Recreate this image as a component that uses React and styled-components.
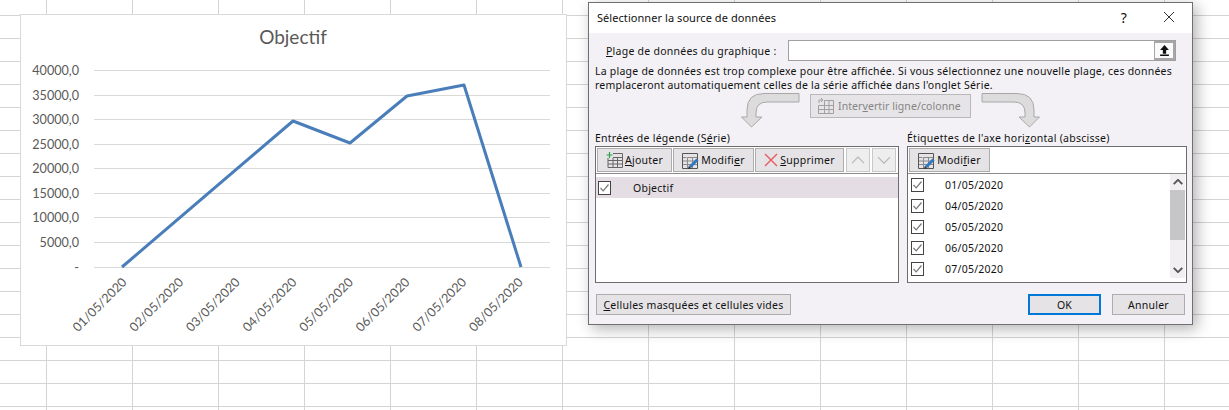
import React from "react";
import styled, { createGlobalStyle } from "styled-components";

const GlobalStyle = createGlobalStyle`
  html, body {
    margin: 0;
    padding: 0;
    overflow: hidden;
  }
`;

const Sheet = styled.div`
  position: relative;
  width: 1229px;
  height: 410px;
  padding: 14px 0 0 20px;
  box-sizing: border-box;
  background-color: #fff;
  background-image:
    linear-gradient(to left, #d4d4d4 1px, transparent 1px),
    linear-gradient(to top, #d4d4d4 1px, transparent 1px);
  background-size: 86px 23px;
  background-position: -39px -7px;
`;

const ChartPanel = styled.div`
  width: 547px;
  height: 332px;
  box-sizing: border-box;
  border: 1px solid #d9d9d9;
  background: #fff;
`;

const ChartSvg = styled.svg`
  display: block;
  font-family: Lato, "Liberation Sans", sans-serif;
  fill: #595959;
`;

const Dialog = styled.div`
  position: absolute;
  left: 588px;
  top: 2px;
  width: 605px;
  height: 323px;
  box-sizing: border-box;
  border: 1px solid #707070;
  background: #f3f1f5;
  box-shadow: 4px 4px 14px rgba(0, 0, 0, 0.3);
  font-family: "Noto Sans", sans-serif;
  font-size: 10.5px;
  letter-spacing: 0.25px;
  color: #111;
`;

const TitleBar = styled.div`
  display: flex;
  align-items: center;
  height: 30px;
  padding: 0 0 2px 8px;
  box-sizing: border-box;
  background: #fff;
`;

const Title = styled.div`
  flex: 1;
  font-size: 11px;
  letter-spacing: 0.06px;
`;

const HelpMark = styled.span`
  width: 14px;
  margin-right: 32px;
  font-size: 14px;
  text-align: center;
`;

const CloseBox = styled.span`
  display: flex;
  margin-right: 17px;
`;

const Body = styled.div`
  padding: 7px 5px 0 6px;
`;

const RangeRow = styled.div`
  display: flex;
  align-items: center;
  height: 21px;
  padding-left: 11px;
`;

const RangeLabel = styled.label`
  width: 182px;
`;

const RangeInput = styled.div`
  display: flex;
  justify-content: flex-end;
  width: 388px;
  height: 21px;
  box-sizing: border-box;
  border: 1px solid #a0a0a0;
  background: #fff;
`;

const RangeButton = styled.span`
  display: flex;
  align-items: center;
  justify-content: center;
  width: 21px;
  box-sizing: border-box;
  border: 2px solid #a6a6a6;
  border-left-width: 1px;
  background: #fafafa;
`;

const Note = styled.p`
  margin: 3px 0 0;
  font-size: 10.5px;
  line-height: 14px;
  letter-spacing: 0.235px;
  white-space: nowrap;
`;

const ArrowRow = styled.div`
  display: flex;
  align-items: flex-start;
  height: 38px;
  margin-top: 1px;
  padding-left: 146px;
`;

const Arrow = styled.svg`
  flex: none;
  transform: ${(p) => (p.$flip ? "scaleX(-1)" : "none")};
`;

const SwapButton = styled.div`
  display: flex;
  align-items: center;
  gap: 4px;
  width: 161px;
  height: 24px;
  margin: 1px 10px 0 10px;
  padding-left: 7px;
  box-sizing: border-box;
  border: 1px solid #b9b9b9;
  background: #e6e4e7;
  color: #858585;
  letter-spacing: 0.08px;
`;

const Columns = styled.div`
  display: grid;
  grid-template-columns: 304px 280px;
  column-gap: 8px;
`;

const Heading = styled.div`
  height: 15px;
  line-height: 15px;
`;

const ListBox = styled.div`
  display: flex;
  flex-direction: column;
  height: 137px;
  box-sizing: border-box;
  border: 1px solid #6d6d6d;
  background: #fff;
`;

const Toolbar = styled.div`
  display: flex;
  flex: none;
  gap: 1px;
  height: 27px;
  padding: 1px 0 0 1px;
  box-sizing: border-box;
  border-bottom: 1px solid #8c8c8c;
  margin-bottom: ${(p) => p.$gap}px;
`;

const ToolButton = styled.button`
  display: flex;
  align-items: center;
  justify-content: center;
  gap: 2px;
  width: ${(p) => p.$w}px;
  height: 24px;
  margin-left: ${(p) => p.$ml || 0}px;
  padding: 0;
  box-sizing: border-box;
  border: 1px solid ${(p) => (p.disabled ? "#c8c8c8" : "#adadad")};
  background: ${(p) => (p.disabled ? "#eeeeee" : "#e5e3e6")};
  color: #111;
  font: inherit;
  letter-spacing: inherit;
`;

const ListBody = styled.div`
  display: flex;
  flex: 1;
  min-height: 0;
`;

const Rows = styled.div`
  flex: 1;
`;

const Row = styled.div`
  display: flex;
  align-items: center;
  height: 21px;
  padding-left: ${(p) => p.$pad}px;
  background: ${(p) => (p.$selected ? "#e4dee4" : "transparent")};
`;

const RowText = styled.span`
  margin-left: ${(p) => p.$gap}px;
`;

const Scrollbar = styled.div`
  display: flex;
  flex-direction: column;
  width: 15px;
  height: 104px;
  margin-right: 1px;
  background: #f1eff2;
`;

const ScrollEnd = styled.div`
  display: flex;
  align-items: center;
  justify-content: center;
  height: 16px;
`;

const ScrollThumb = styled.div`
  height: 50px;
  background: #c6c5c7;
`;

const ScrollGap = styled.div`
  flex: 1;
`;

const Footer = styled.div`
  display: flex;
  gap: 11px;
  margin-top: 11px;
  padding: 0 2px 0 1px;
`;

const FooterButton = styled.button`
  width: ${(p) => p.$w}px;
  height: 21px;
  margin-right: ${(p) => (p.$push ? "auto" : "0")};
  padding: 0;
  box-sizing: border-box;
  border: ${(p) => (p.$primary ? "2px solid #0078d7" : "1px solid #adadad")};
  background: #e5e3e6;
  color: #111;
  font: inherit;
  letter-spacing: inherit;
`;

const Key = styled.span`
  text-decoration: underline;
`;

const yLabels = [
  ["40000,0", 70],
  ["35000,0", 95],
  ["30000,0", 119],
  ["25000,0", 144],
  ["20000,0", 168],
  ["15000,0", 193],
  ["10000,0", 217],
  ["5000,0", 242],
  ["-", 267],
];

const dates = ["01", "02", "03", "04", "05", "06", "07", "08"].map((d) => `${d}/05/2020`);

const points = "122,267 293,121 350,143 407,96 464,85 521,267";

const Chart = () => (
  <ChartSvg width="545" height="330" viewBox="21 15 545 330">
    <text x="293" y="44" fontSize="19" textAnchor="middle">Objectif</text>
    {yLabels.map(([label, y]) => (
      <g key={label}>
        <line x1="94" x2="550" y1={y + 0.5} y2={y + 0.5} stroke="#d9d9d9" />
        <text x="79" y={y + 5} fontSize="12.6" textAnchor="end">{label}</text>
      </g>
    ))}
    <polyline points={points} fill="none" stroke="#4a7ebb" strokeWidth="3" strokeLinejoin="round" />
    {dates.map((d, i) => (
      <text
        key={d}
        fontSize="12.6"
        textAnchor="end"
        transform={`translate(${127.5 + i * 56.6} 283) rotate(-45)`}
      >
        {d}
      </text>
    ))}
  </ChartSvg>
);

const CurvedArrow = ({ flip }) => (
  <Arrow $flip={flip} width="59" height="35" viewBox="0 0 59 35">
    <path
      d="M58 .5V9H26Q15 9 15 20V24H21L10.5 34 .5 24H6V17Q6 .5 23 .5Z"
      fill="#dcdcdc"
      stroke="#a8a8a8"
    />
  </Arrow>
);

const TableGrid = () => (
  <g fill="none">
    <path d="M.5 5.5H4.5M.5 9H15.5M.5 12.5H15.5M5.5 5.5V16.5M10.5 5.5V16.5M5.5 5.5H15.5" stroke="#8a8a8a" />
    <path d="M.5 1.5H15.5V16.5H.5Z" stroke="#555" />
  </g>
);

const AddIcon = () => (
  <svg width="17" height="17" viewBox="-1 0 17 17">
    <path d="M1 1.5H15.5V15.5H1V1.5ZM1 5.5H15.5M1 8.5H15.5M1 12H15.5M6 5.5V15.5M10.5 5.5V15.5" fill="none" stroke="#666" />
    <rect x="-1" y="0" width="7" height="6" fill="#e5e3e6" />
    <path d="M2.5 0V6M-.5 3H5.5" stroke="#2ca24c" strokeWidth="1.2" />
  </svg>
);

const EditIcon = () => (
  <svg width="17" height="17" viewBox="0 0 17 17">
    <TableGrid />
    <path d="M8 15L15.5 7.5" stroke="#2f78c4" strokeWidth="3" />
    <path d="M6 17L6.8 13.8L9.2 16.2Z" fill="#333" />
  </svg>
);

const DeleteIcon = () => (
  <svg width="14" height="14" viewBox="0 0 14 14">
    <path d="M1 1L13 13M13 1L1 13" stroke="#e8595b" strokeWidth="1.4" />
  </svg>
);

const SwapIcon = () => (
  <svg width="16" height="16" viewBox="0 0 16 16">
    <g fill="none" stroke="#a0a0a0">
      <path d="M6.5 2.5H15.5V15.5H.5V7.5H6.5ZM.5 11.5H15.5M6.5 7.5H15.5M6.5 7.5V15.5M11 2.5V15.5" />
      <path d="M1 5V2H4M3 0L5 2L3 4" />
    </g>
  </svg>
);

const Chevron = ({ up, color = "#b5b5b5", weight = 1.2, size = 14 }) => (
  <svg width={size} height={size * 0.6} viewBox="0 0 14 8">
    <path d={up ? "M1 7L7 1L13 7" : "M1 1L7 7L13 1"} fill="none" stroke={color} strokeWidth={weight} />
  </svg>
);

const CheckBox = () => (
  <svg width="13" height="14" viewBox="0 0 13 14">
    <rect x=".5" y=".5" width="12" height="13" fill="#fff" stroke="#444" />
    <path d="M2.5 7L5.2 9.8L10.5 3.5" fill="none" stroke="#777" strokeWidth="1.2" />
  </svg>
);

const App = () => (
  <>
    <GlobalStyle />
    <Sheet>
      <ChartPanel>
        <Chart />
      </ChartPanel>
      <Dialog>
        <TitleBar>
          <Title>Sélectionner la source de données</Title>
          <HelpMark>?</HelpMark>
          <CloseBox>
            <svg width="12" height="12" viewBox="0 0 12 12">
              <path d="M1 1L11 11M11 1L1 11" stroke="#333" />
            </svg>
          </CloseBox>
        </TitleBar>
        <Body>
          <RangeRow>
            <RangeLabel><Key>P</Key>lage de données du graphique :</RangeLabel>
            <RangeInput>
              <RangeButton>
                <svg width="11" height="11" viewBox="0 0 10 10">
                  <path d="M5 0L9 4.5H6.5V8H3.5V4.5H1ZM1 8.7H9V10H1Z" fill="#111" />
                </svg>
              </RangeButton>
            </RangeInput>
          </RangeRow>
          <Note>
            La plage de données est trop complexe pour être affichée. Si vous sélectionnez une nouvelle plage, ces données
            <br />
            remplaceront automatiquement celles de la série affichée dans l'onglet Série.
          </Note>
          <ArrowRow>
            <CurvedArrow />
            <SwapButton>
              <SwapIcon />
              <span>Inter<Key>v</Key>ertir ligne/colonne</span>
            </SwapButton>
            <CurvedArrow flip />
          </ArrowRow>
          <Columns>
            <div>
              <Heading>Entrées de légende (S<Key>é</Key>rie)</Heading>
              <ListBox>
                <Toolbar $gap={3}>
                  <ToolButton $w={75}><AddIcon /><span><Key>A</Key>jouter</span></ToolButton>
                  <ToolButton $w={81}><EditIcon /><span>Modifi<Key>e</Key>r</span></ToolButton>
                  <ToolButton $w={89}><DeleteIcon /><span><Key>S</Key>upprimer</span></ToolButton>
                  <ToolButton $w={24} $ml={1} disabled><Chevron up /></ToolButton>
                  <ToolButton $w={24} $ml={1} disabled><Chevron /></ToolButton>
                </Toolbar>
                <Rows>
                  <Row $selected $pad={2}>
                    <CheckBox />
                    <RowText $gap={22}>Objectif</RowText>
                  </Row>
                </Rows>
              </ListBox>
            </div>
            <div>
              <Heading>Étiquettes de l'axe hori<Key>z</Key>ontal (abscisse)</Heading>
              <ListBox>
                <Toolbar $gap={0}>
                  <ToolButton $w={81}><EditIcon /><span>Modi<Key>f</Key>ier</span></ToolButton>
                </Toolbar>
                <ListBody>
                  <Rows>
                    {["01", "04", "05", "06", "07"].map((d) => (
                      <Row key={d} $pad={3}>
                        <CheckBox />
                        <RowText $gap={21}>{d}/05/2020</RowText>
                      </Row>
                    ))}
                  </Rows>
                  <Scrollbar>
                    <ScrollEnd><Chevron up color="#555" weight={2.6} size={10} /></ScrollEnd>
                    <ScrollThumb />
                    <ScrollGap />
                    <ScrollEnd><Chevron color="#555" weight={2.6} size={10} /></ScrollEnd>
                  </Scrollbar>
                </ListBody>
              </ListBox>
            </div>
          </Columns>
          <Footer>
            <FooterButton $w={195} $push><Key>C</Key>ellules masquées et cellules vides</FooterButton>
            <FooterButton $w={73} $primary>OK</FooterButton>
            <FooterButton $w={73}>Annuler</FooterButton>
          </Footer>
        </Body>
      </Dialog>
    </Sheet>
  </>
);

export default App;
